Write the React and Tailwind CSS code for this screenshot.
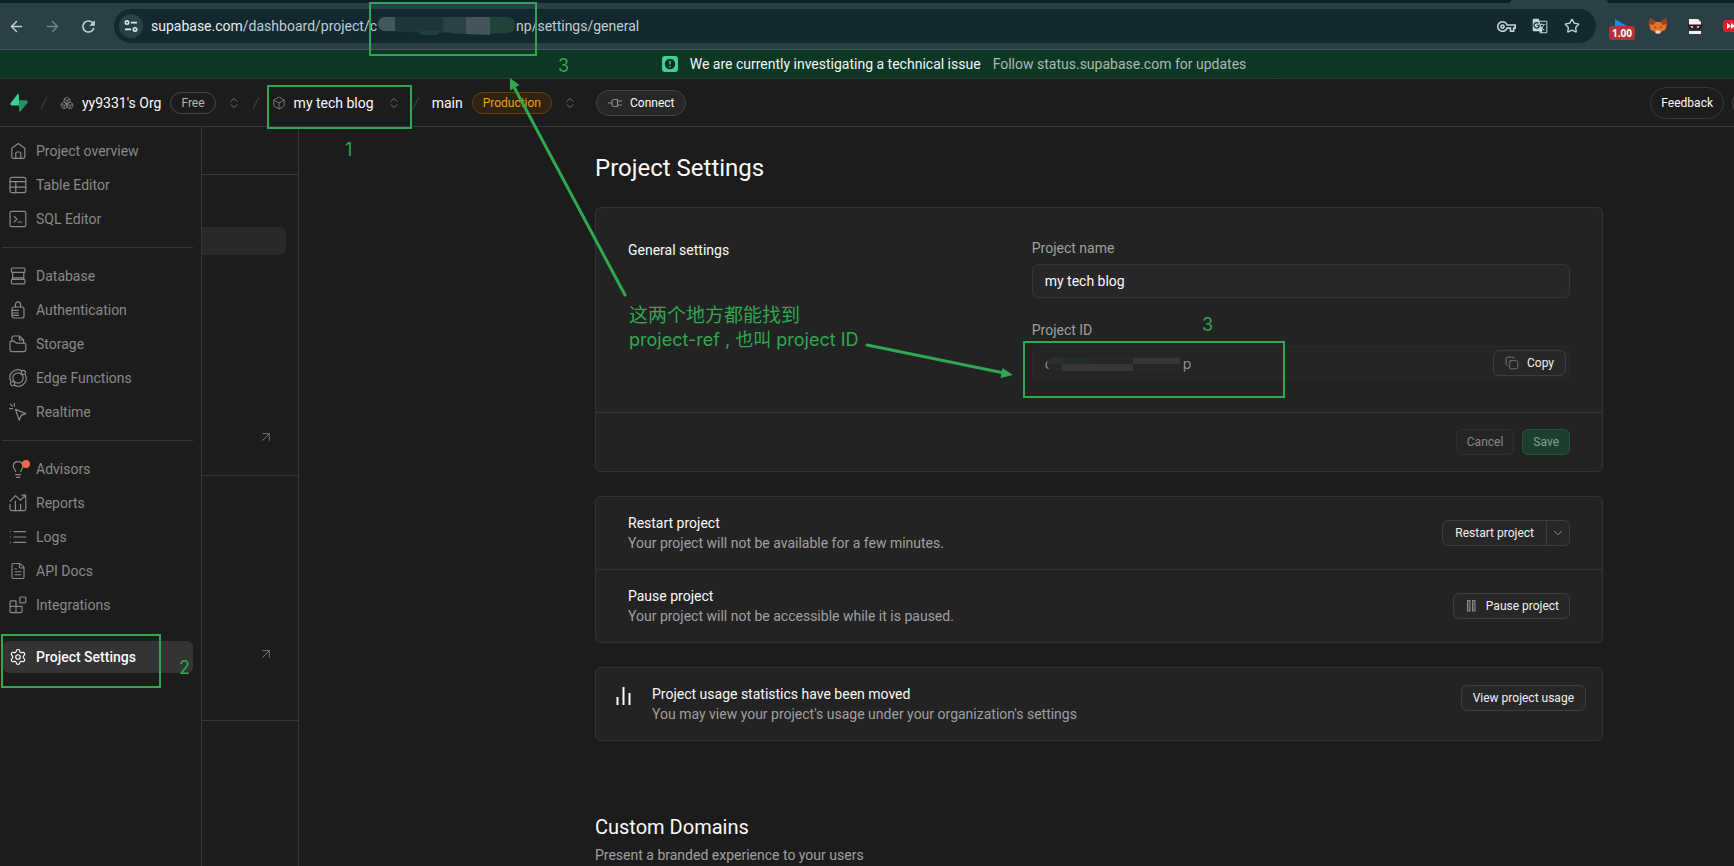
import React from "react";
import { ArrowLeft, ArrowRight, ArrowUpRight, Boxes, Box, ChevronDown, ChevronsUpDown, Copy, FileText, Settings, Star } from "lucide-react";
import { MdOutlineVpnKey, MdRefresh, MdGTranslate } from "react-icons/md";

const Icon = ({ children }) => (
  <svg viewBox="0 0 18 18" className="h-[18px] w-[18px] shrink-0 overflow-visible" fill="none" stroke="currentColor" strokeWidth="1.2" strokeLinecap="round" strokeLinejoin="round" aria-hidden="true">
    {children}
  </svg>
);

const icons = {
  home: <Icon><path d="M2.8 6.3 9.3 1.6l6.5 4.7v8.5a1.6 1.6 0 0 1-1.6 1.6H4.4a1.6 1.6 0 0 1-1.6-1.6Z" /><path d="M6.8 16.2v-5a1.2 1.2 0 0 1 1.2-1.2h2.6a1.2 1.2 0 0 1 1.2 1.2v5" /></Icon>,
  table: <Icon><rect x="1" y="1.3" width="15.8" height="15.4" rx="2" /><path d="M1 5.6h15.8M1 11.2h15.8M6.8 5.6v11" /></Icon>,
  sql: <Icon><rect x="1" y="1.3" width="15.8" height="15.4" rx="1.6" /><path d="m5.2 6.3 2.8 2.8-2.8 2.8M9.2 12h3.6" /></Icon>,
  database: <Icon><rect x="2.4" y="1" width="13.6" height="4.4" rx="1" /><rect x="2.4" y="12.4" width="13.6" height="4.4" rx="1" /><path d="M3.6 5.4v7M14.8 5.4v7M3.6 10.8h11.2" /></Icon>,
  auth: <Icon><rect x="3" y="6" width="12" height="11" rx="2" /><path d="M6.4 6V3.4a2.6 2.6 0 0 1 5.2 0V6M3.2 9.4h6.2M3.2 12h6.2M3.2 14.4h6.2" /></Icon>,
  storage: <Icon><path d="M1 9V7.6a1.4 1.4 0 0 1 1.4-1.4h2.2c1.6 0 1.6 2 3.4 2h7.4a1.4 1.4 0 0 1 1.4 1.4v5a2 2 0 0 1-2 2H3a2 2 0 0 1-2-2Z" /><path d="M3 6V2.4A1.4 1.4 0 0 1 4.4 1h6L14.6 5v3M10.4 1v4h4.2" /></Icon>,
  edge: <Icon><circle cx="9" cy="9" r="5.2" /><path d="M12.6 1.6A8 8 0 0 0 1.6 12M5.6 16.4A8 8 0 0 0 16.4 5.8" /><circle cx="14.4" cy="3.4" r="2.1" /><circle cx="3.6" cy="14.6" r="2.1" /></Icon>,
  realtime: <Icon><path d="m6.4 6.4 10.4 4.2-4.6 1.8-2 4.8ZM5.4.6v2.6M.6 5.6h3M1.4 1.2l2 2" /></Icon>,
  advisors: (
    <span className="relative">
      <Icon><path d="M6.6 11.6c0-2-2.4-3-2.4-6a5 5 0 0 1 9.8 0c0 3-2.2 4-2.2 6M6.6 14.6h5M7.6 17.4h3" /></Icon>
      <span className="absolute -right-[3px] top-0 h-2 w-2 rounded-full bg-[#f2694a]" />
    </span>
  ),
  reports: <Icon><path d="M1 10.4v4.4A1.8 1.8 0 0 0 2.8 16.6h12.2a1.8 1.8 0 0 0 1.8-1.8V6.4M1 7.4l5.4-5.8 5 4.6 5-4.8M12.8 1.2h3.8V5M6.4 7v9.4M11.6 10.4v6" /></Icon>,
  logs: <Icon><path d="M5 3.6h11.8M5 9h11.8M5 14.4h11.8M1.4 3.6h.1M1.4 9h.1M1.4 14.4h.1" /></Icon>,
  docs: <FileText size={18} strokeWidth={1.5} />,
  blocks: <Icon><rect x="10.8" y="1" width="6" height="5.8" rx=".8" /><path d="M1 10.4h12v5a1.2 1.2 0 0 1-1.2 1.2H2.2A1.2 1.2 0 0 1 1 15.4V6a1.2 1.2 0 0 1 1.2-1.2H7v11.8" /></Icon>,
  settings: <Settings size={18} strokeWidth={1.6} />,
};

const groups = [
  [["home", "Project overview"], ["table", "Table Editor"], ["sql", "SQL Editor"]],
  [["database", "Database"], ["auth", "Authentication"], ["storage", "Storage"], ["edge", "Edge Functions"], ["realtime", "Realtime"]],
  [["advisors", "Advisors"], ["reports", "Reports"], ["logs", "Logs"], ["docs", "API Docs"], ["blocks", "Integrations"]],
];

const NavItem = ({ icon, label, active }) => (
  <a href="#" className={active ? "flex h-8 items-center gap-[9px] rounded-md bg-[#343434] pl-1.5 font-medium text-[#fafafa]" : "flex h-8 items-center gap-[9px] rounded-md pl-1.5 text-[#898989]"}>
    {icons[icon]}
    <span>{label}</span>
  </a>
);

const Btn = ({ children, className = "" }) => (
  <button className={`flex h-[26px] items-center rounded-md border border-[#3e3e3e] bg-[#272727] text-xs text-[#f0f0f0] ${className}`}>{children}</button>
);

const Slash = () => (
  <svg width="8" height="14" viewBox="0 0 8 14" stroke="#454545" aria-hidden="true"><path d="M7 1 1 13" /></svg>
);

const Switcher = ({ label }) => (
  <button aria-label={label} className="text-[#8a8a8a]"><ChevronsUpDown size={14} strokeWidth={1.3} /></button>
);

function BrowserBar() {
  return (
    <div className="border-b border-[#46575c] bg-[#2a3f46]">
      <div className="flex h-[3px] justify-end bg-[#0c2128]">
        <div className="mr-[126px] w-[98px] rounded-t-sm bg-[#2a3f46]" />
      </div>
      <div className="flex h-[46px] items-center text-[#c3d4d8]">
        <button aria-label="Back" className="ml-2"><ArrowLeft size={17} strokeWidth={2} /></button>
        <button aria-label="Forward" className="ml-[19px] text-[#71858b]"><ArrowRight size={17} strokeWidth={2} /></button>
        <button aria-label="Reload" className="ml-[18px]"><MdRefresh size={19} /></button>
        <div className="ml-4 flex h-[34px] min-w-0 flex-1 items-center rounded-full bg-[#13292f] pl-[5px] pr-4">
          <button aria-label="Site information" className="flex h-6 w-6 items-center justify-center rounded-full bg-[#2a3f46]">
            <svg width="14" height="12" viewBox="0 0 14 12" fill="none" stroke="#dbe7ea" strokeWidth="1.6" aria-hidden="true">
              <circle cx="3" cy="2.6" r="1.7" /><path d="M7 2.6h6M1 9.4h6" /><circle cx="11" cy="9.4" r="1.7" />
            </svg>
          </button>
          <div role="textbox" aria-label="Address" className="ml-2 flex items-center whitespace-nowrap text-sm text-[#c0ced2]">
            <span className="text-[#e6eff1]">supabase.com</span>
            <span>/dashboard/project/c</span>
            <svg width="139" height="18" viewBox="-3 0 139 18" aria-hidden="true">
              <path d="M7 0H68v16q-30 0-61-2a7 7 0 0 1 0-14Z" fill="#20353b" />
              <path d="M5 0h10v14H5A7 7 0 0 1 5 0Z" fill="#44575c" />
              <path d="M38 14h22q-1 4-5 4H44q-5 0-6-4Z" fill="#1b4436" />
              <path d="M63 0h23v17q-14 0-23-3Z" fill="#2c4147" />
              <path d="M86 0h24v18l-24-1Z" fill="#44565c" />
              <path d="M110 0h18q7 1 7 8t-7 8l-18 1Z" fill="#214239" />
            </svg>
            <span>np/settings/general</span>
          </div>
          <div className="ml-auto flex items-center gap-4">
            <button aria-label="Passwords"><MdOutlineVpnKey size={19} /></button>
            <button aria-label="Translate"><MdGTranslate size={16} /></button>
            <button aria-label="Bookmark"><Star size={16} strokeWidth={2} /></button>
          </div>
        </div>
        <div className="flex w-[138px] shrink-0 items-center overflow-hidden pl-[13px]">
          <span className="relative mt-[7px] h-[21px] w-[26px] shrink-0">
            <svg className="absolute left-1.5 top-0" width="12" height="7" aria-hidden="true"><path d="M0 0v7h12Z" fill="#1b8be8" /></svg>
            <span className="absolute bottom-0 left-0 w-[26px] rounded-[3px] bg-[#b03436] text-center font-['Open_Sans',sans-serif] text-[10px] font-bold leading-[14px] text-white">1.00</span>
          </span>
          <svg className="ml-[14px] shrink-0" width="18" height="16" viewBox="0 0 18 16" aria-hidden="true">
            <path d="m1 0 6 4h4l6-4 .8 6-1.4 6-3.8 1.4L11 15.6H7l-1.6-2.2L1.6 12 .2 6Z" fill="#e8722c" />
            <path d="m1 0 6 4-3 3-3.8-1ZM17 0l-6 4 3 3 3.8-1Z" fill="#9c3f1c" />
            <path d="M7 12.4h4l.6 1.6-.8 1.6H7.2L6.4 14Z" fill="#e7d5c6" />
            <path d="m4.6 8.4 2 .4.2 1.4ZM13.4 8.4l-2 .4-.2 1.4Z" fill="#27323f" />
          </svg>
          <svg className="ml-5 shrink-0" width="16" height="15" viewBox="0 0 16 15" aria-hidden="true">
            <path d="M2 0h9l3 3v3H2ZM2 12h12v3H2Z" fill="#f2f2f2" />
            <path d="M1 5.500h14.400l-.6 4-3.400 1.600-2.600-1.200-2.600 1.200L1.600 9.500Z" fill="#3a1418" />
            <path d="m3.400 7 3.200.8-.6 1H4.400ZM12.600 7l-3.200.8.6 1h1.600Z" fill="#fff" />
          </svg>
          <svg className="ml-5 shrink-0" width="20" height="12" viewBox="0 0 20 12" aria-hidden="true">
            <rect width="20" height="12" rx="3" fill="#de1f2b" />
            <path d="M4 3v6l4-3ZM8 3v6l4-3Z" fill="#fff" />
          </svg>
        </div>
      </div>
    </div>
  );
}

function Header() {
  return (
    <header className="flex h-12 items-center overflow-hidden border-b border-[#363636] text-[#fafafa]">
      <a href="#" aria-label="Supabase" className="ml-[10px]">
        <svg width="18" height="18" viewBox="0 0 109 113" aria-hidden="true">
          <path d="M63.7 110.3c-2.9 3.6-8.7 1.6-8.8-3L54 40h45.2c8.2 0 12.8 9.5 7.7 15.9Z" fill="#249361" />
          <path d="M45.3 2.1c2.9-3.6 8.7-1.6 8.8 3l.4 67.3H9.8c-8.2 0-12.8-9.5-7.7-15.9Z" fill="#3ecf8e" />
        </svg>
      </a>
      <span className="ml-3"><Slash /></span>
      <a href="#" className="ml-3 flex items-center gap-2"><Boxes size={14} strokeWidth={1.4} className="text-[#8a8a8a]" />yy9331's Org</a>
      <span className="ml-[9px] flex h-[22px] items-center rounded-full border border-[#454545] px-[10px] text-xs text-[#b4b4b4]">Free</span>
      <span className="ml-[11px] flex"><Switcher label="Switch organization" /></span>
      <span className="ml-[11px]"><Slash /></span>
      <a href="#" className="ml-3 flex items-center gap-2"><Box size={14} strokeWidth={1.4} className="text-[#8a8a8a]" />my tech blog</a>
      <span className="ml-[13px] flex"><Switcher label="Switch project" /></span>
      <span className="ml-[11px]"><Slash /></span>
      <a href="#" className="ml-3">main</a>
      <span className="ml-[9px] flex h-[22px] items-center rounded-full border border-[#663f0c] bg-[#2f2411] px-[10px] text-xs text-[#f0a00e]">Production</span>
      <span className="ml-[11px] flex"><Switcher label="Switch branch" /></span>
      <button className="ml-[19px] flex h-[26px] items-center gap-2 rounded-full border border-[#434343] bg-[#272727] px-[11px] text-xs">
        <svg width="14" height="10" viewBox="0 0 14 10" fill="none" stroke="#8a8a8a" strokeWidth="1.2" aria-hidden="true"><path d="M0 5h4M6 1.500h3.500v7H6A2 2 0 0 1 4 6.500V3.500A2 2 0 0 1 6 1.500M9.500 3H14M9.500 7H14" /></svg>
        Connect
      </button>
      <button className="ml-auto h-8 shrink-0 rounded-full border border-[#363636] px-[10px] text-xs">Feedback</button>
      <button aria-label="Help" className="-mr-[30px] ml-2 h-8 w-8 shrink-0 rounded-full border border-[#434343]" />
    </header>
  );
}

function Annotations() {
  return (
    <div className="pointer-events-none absolute left-0 top-0 font-['Inter','Noto_Sans_CJK_SC',sans-serif] text-lg leading-6 text-[#2fa84f]">
      <svg width="1300" height="700" viewBox="0 0 1300 700" fill="none" stroke="#2fa84f" strokeWidth="2" aria-hidden="true">
        <rect x="370" y="3" width="166" height="52" />
        <rect x="268" y="86" width="143" height="42" />
        <rect x="2" y="635" width="158" height="52" />
        <rect x="1024" y="342" width="260" height="55" />
        <path d="M625 295 514 87M867 345 1004 373" strokeWidth="3" strokeLinecap="round" />
        <path d="m510 78 9.500 7-9.500 5.500ZM1013 375l-10.500-7-2 10Z" fill="#2fa84f" stroke="none" />
      </svg>
      <span className="absolute left-[345px] top-[138px]">1</span>
      <span className="absolute left-[179px] top-[656px]">2</span>
      <span className="absolute left-[558px] top-[54px]">3</span>
      <span className="absolute left-[1202px] top-[313px]">3</span>
      <p className="absolute left-[629px] top-[304px] whitespace-nowrap"><span className="text-[19px]">这两个地方都能找到</span><br />project-ref , 也叫 project ID</p>
    </div>
  );
}

const Row = ({ title, text, children }) => (
  <div className="flex items-center justify-between px-8 py-4">
    <div><h3 className="text-[#fafafa]">{title}</h3><p className="text-[#a0a0a0]">{text}</p></div>
    {children}
  </div>
);

export default function App() {
  return (
    <div className="relative flex min-h-screen flex-col overflow-hidden bg-[#1c1c1c] font-['Roboto','Noto_Sans_CJK_SC',sans-serif] text-sm leading-5 text-[#fafafa]">
      <BrowserBar />
      <div className="flex h-[29px] items-center justify-center border-b border-[#2e3a34] bg-[#0c3724] bg-[repeating-linear-gradient(45deg,#0c3724_0px,#0c3724_24px,#0d3826_28px,#0d3826_44px)] pl-[174px]">
        <svg width="16" height="16" viewBox="0 0 16 16" className="shrink-0" aria-hidden="true">
          <rect width="16" height="16" rx="3" fill="#3fcf8e" /><circle cx="8" cy="8" r="5.200" fill="#0c2f21" /><path d="M8 5v3.400M8 10v1.200" stroke="#3fcf8e" strokeWidth="1.400" />
        </svg>
        <span className="ml-3 text-[#f2f7f4]">We are currently investigating a technical issue</span>
        <a href="#" className="ml-3 text-[#a9bcb2]">Follow status.supabase.com for updates</a>
      </div>
      <Header />
      <div className="flex flex-1">
        <nav className="w-[202px] shrink-0 border-r border-[#363636] pt-2">
          {groups.map((g, i) => (
            <div key={i} className={i ? "ml-0.5 mr-2 mt-3 border-t border-[#363636] pt-3" : "ml-0.5 mr-2"}>
              <div className="ml-px flex flex-col gap-0.5">
                {g.map(([icon, label]) => <NavItem key={label} icon={icon} label={label} />)}
              </div>
            </div>
          ))}
          <div className="ml-[3px] mr-2 mt-5"><NavItem icon="settings" label="Project Settings" active /></div>
        </nav>
        <aside className="flex w-[97px] shrink-0 flex-col border-r border-[#363636] text-[#8a8a8a]">
          <div className="h-12 border-b border-[#363636]" />
          <div className="flex h-[301px] flex-col border-b border-[#363636]">
            <div className="mr-3 mt-[52px] h-7 rounded-r-md bg-[#292929]" />
            <ArrowUpRight size={16} strokeWidth={1.2} className="mb-[30px] ml-auto mr-6 mt-auto" />
          </div>
          <div className="flex h-[245px] flex-col border-b border-[#363636]">
            <ArrowUpRight size={16} strokeWidth={1.2} className="mb-[58px] ml-auto mr-6 mt-auto" />
          </div>
        </aside>
        <main className="min-w-0 flex-1 pl-[296px] pr-[131px] pt-[25px]">
          <h1 className="text-2xl leading-8">Project Settings</h1>
          <section className="mt-[23px] rounded-md border border-[#333] bg-[#232323]">
            <div className="grid grid-cols-[3fr_4fr] px-8 pb-8 pt-[30px]">
              <h2 className="mt-0.5">General settings</h2>
              <div className="flex flex-col">
                <label htmlFor="name" className="text-[#a0a0a0]">Project name</label>
                <input id="name" defaultValue="my tech blog" className="mt-1.5 h-[34px] rounded-md border border-[#363636] bg-[#272727] px-3" />
                <label htmlFor="ref" className="mt-[22px] text-[#a0a0a0]">Project ID</label>
                <div className="relative mt-1.5 flex">
                  <input id="ref" readOnly value={"c\u2003\u2003\u2003\u2003\u2003\u2003\u2003\u2003\u2003 p"} className="h-[34px] w-full rounded-md border border-[#2a2a2a] bg-[#252525] px-3 font-['Inter',sans-serif] text-[#8f8f8f]" />
                  <svg className="absolute left-[15px] top-[10px]" width="134" height="16" viewBox="0 0 134 16" aria-hidden="true">
                    <path d="M6 1h128v14H15V14H2Q-2 3 6 1Z" fill="#272727" />
                    <path d="M4 2h11v6H0Q1 3 4 2Z" fill="#2e2e2e" />
                    <path d="M15 2h28v6H15Z" fill="#233028" />
                    <path d="M15 8h71v7H15ZM86 2h47v6H86Z" fill="#373737" />
                  </svg>
                  <Btn className="absolute right-1 top-1 gap-2 px-[11px]"><Copy size={14} strokeWidth={1.3} className="text-[#8a8a8a]" />Copy</Btn>
                </div>
              </div>
            </div>
            <div className="flex h-[59px] items-center justify-end gap-2 border-t border-[#363636] px-8">
              <button className="h-[26px] rounded-md border border-[#303030] bg-[#252525] px-[10px] text-xs text-[#8a8a8a]">Cancel</button>
              <button className="h-[26px] rounded-md border border-[#23553c] bg-[#1b3f2e] px-[10px] text-xs text-[#8d9c94]">Save</button>
            </div>
          </section>
          <section className="mt-6 divide-y divide-[#333] rounded-md border border-[#333] bg-[#232323]">
            <Row title="Restart project" text="Your project will not be available for a few minutes.">
              <div className="flex">
                <Btn className="rounded-r-none px-3">Restart project</Btn>
                <button aria-label="More restart options" className="-ml-px flex h-[26px] w-6 items-center justify-center rounded-r-md border border-[#3e3e3e] bg-[#272727] text-[#a0a0a0]"><ChevronDown size={14} strokeWidth={1.4} /></button>
              </div>
            </Row>
            <Row title="Pause project" text="Your project will not be accessible while it is paused.">
              <Btn className="gap-2 px-[10px]">
                <svg width="14" height="12" viewBox="0 0 14 12" fill="#4a4a4a" stroke="#8a8a8a" aria-hidden="true"><rect x="3.500" y=".5" width="2.500" height="10.500" /><rect x="8.500" y=".5" width="2.500" height="10.500" /></svg>
                Pause project
              </Btn>
            </Row>
          </section>
          <section className="mt-6 flex items-start rounded-md border border-[#333] bg-[#232323] px-4 py-4">
            <svg className="ml-1 mt-[3px] shrink-0" width="16" height="18" viewBox="0 0 16 18" stroke="#fafafa" strokeWidth="2" aria-hidden="true"><path d="M1.500 10v8M7.500 0v18M13.500 6v12" /></svg>
            <div className="ml-5">
              <h3>Project usage statistics have been moved</h3>
              <p className="text-[#a0a0a0]">You may view your project's usage under your organization's settings</p>
            </div>
            <Btn className="ml-auto mt-px px-[11px]">View project usage</Btn>
          </section>
          <h2 className="mt-[72px] text-xl">Custom Domains</h2>
          <p className="mt-1 text-[#a0a0a0]">Present a branded experience to your users</p>
        </main>
      </div>
      <Annotations />
    </div>
  );
}
